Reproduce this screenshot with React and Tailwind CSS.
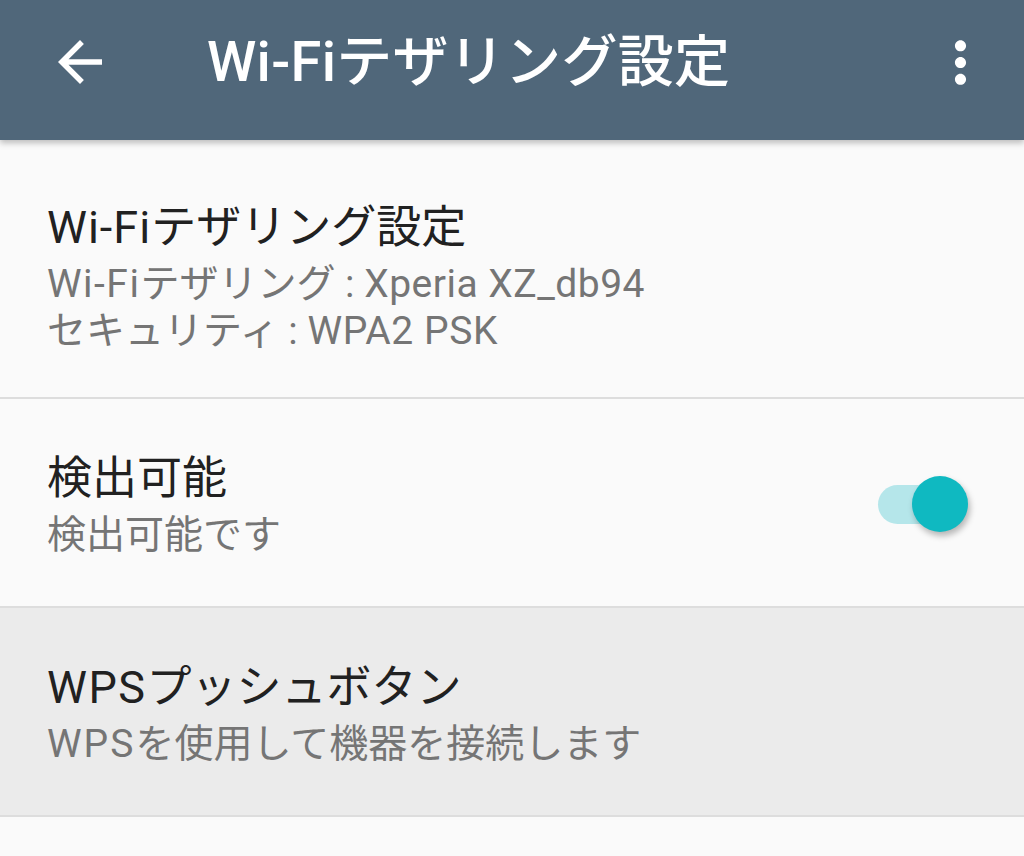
import React from "react";

const font = { fontFamily: '"Roboto", "Noto Sans CJK JP", sans-serif' };

function Item({ title, lines, right, className = "", pt = "pt-[50px]", pb = "pb-[47px]" }) {
  return (
    <div className={`flex items-center border-b-2 border-[#dddddd] pl-[47px] pr-[56px] ${pt} ${pb} ${className}`}>
      <div className="flex flex-1 flex-col">
        <div className="text-[45px] leading-[60px] text-[#212121] whitespace-nowrap">{title}</div>
        <div className="mt-[3px] flex flex-col">
          {lines.map((l, i) => (
            <div key={i} className="text-[39px] leading-[47px] text-[#757575] whitespace-pre">{l}</div>
          ))}
        </div>
      </div>
      {right}
    </div>
  );
}

function Switch() {
  return (
    <div className="relative h-[56px] w-[90px]">
      <div className="absolute left-0 top-[9px] h-[39px] w-[82px] rounded-full bg-[#b5e6ea]" />
      <div className="absolute right-0 top-0 h-[56px] w-[56px] rounded-full bg-[#0fb9c1] shadow-[2px_4px_6px_rgba(0,0,0,0.28)]" />
    </div>
  );
}

export default function App() {
  return (
    <div className="relative h-[856px] w-[1024px] overflow-hidden bg-[#fafafa]" style={font}>
      <header className="relative z-10 h-[140px] bg-[#50677a] shadow-[0_3px_6px_rgba(0,0,0,0.25)]">
        <div className="flex h-[124px] items-center pl-[47px] pr-[30px]">
          <svg width="66" height="66" viewBox="0 0 24 24" fill="white">
            <path d="M20 11H7.83l5.59-5.59L12 4l-8 8 8 8 1.41-1.41L7.83 13H20v-2z" />
          </svg>
          <div className="ml-[94px] text-[56px] font-medium leading-none text-white whitespace-nowrap tracking-[0.3px]">
            Wi-Fiテザリング設定
          </div>
          <svg className="ml-auto" width="67" height="67" viewBox="0 0 24 24" fill="white">
            <path d="M12 8c1.1 0 2-.9 2-2s-.9-2-2-2-2 .9-2 2 .9 2 2 2zm0 2c-1.1 0-2 .9-2 2s.9 2 2 2 2-.9 2-2-.9-2-2-2zm0 6c-1.1 0-2 .9-2 2s.9 2 2 2 2-.9 2-2-.9-2-2-2z" />
          </svg>
        </div>
      </header>
      <Item
        title={<><span className="tracking-[1px]">Wi-Fi</span>テザリング設定</>}
        lines={[
          <><span className="tracking-[1.5px]">Wi-Fi</span>テザリング : <span className="tracking-[0.5px]">Xperia XZ_db94</span></>,
          <>セキュリティ : <span className="tracking-[0.6px]">WPA2 PSK</span></>,
        ]}
        pt="pt-[58px]"
        pb="pb-[42px]"
      />
      <Item title="検出可能" lines={["検出可能です"]} right={<Switch />} />
      <Item
        title={<><span className="tracking-[1.5px]">WPS</span>プッシュボタン</>}
        lines={[<><span className="tracking-[2px]">WPS</span>を使用して機器を接続します</>]}
        className="bg-[#ebebeb]"
      />
      <div className="h-[60px] bg-[#fafafa]" />
    </div>
  );
}
